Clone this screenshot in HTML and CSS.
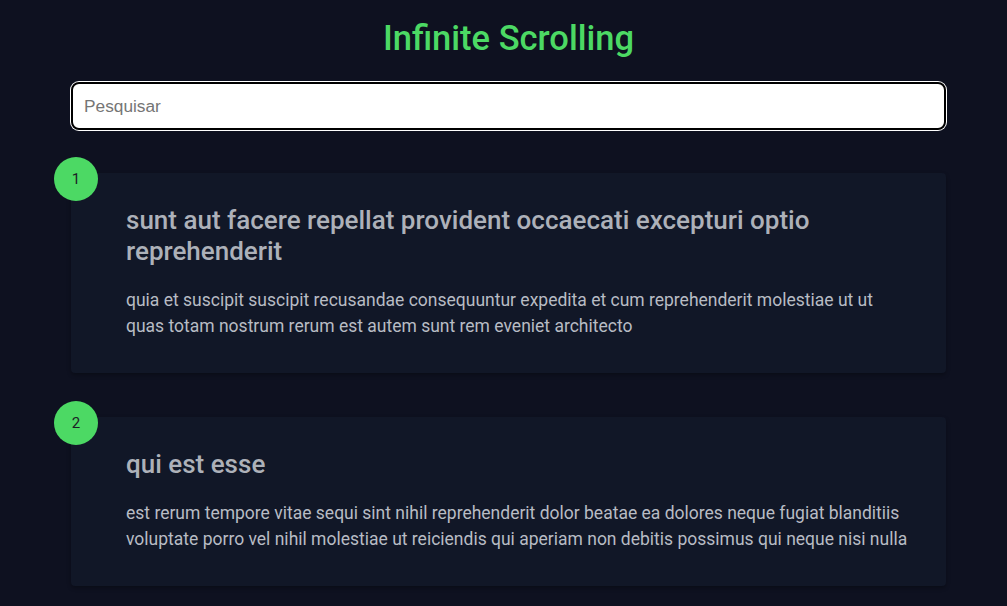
FILE: index.html
```html
<!DOCTYPE html>
<html lang="pt">
<head>
<meta charset="utf-8">
<title>Infinite Scrolling</title>
<link rel="stylesheet" href="styles.css">
</head>
<body>
<main class="page">
  <h1 class="title">Infinite Scrolling</h1>
  <input class="search" type="text" placeholder="Pesquisar">
  <div class="posts">
    <article class="post">
      <div class="number">1</div>
      <h2 class="post-title">sunt aut facere repellat provident occaecati excepturi optio reprehenderit</h2>
      <p class="post-body">quia et suscipit suscipit recusandae consequuntur expedita et cum reprehenderit molestiae ut ut quas totam nostrum rerum est autem sunt rem eveniet architecto</p>
    </article>
    <article class="post">
      <div class="number">2</div>
      <h2 class="post-title">qui est esse</h2>
      <p class="post-body">est rerum tempore vitae sequi sint nihil reprehenderit dolor beatae ea dolores neque fugiat blanditiis voluptate porro vel nihil molestiae ut reiciendis qui aperiam non debitis possimus qui neque nisi nulla</p>
    </article>
  </div>
</main>
</body>
</html>
```
FILE: styles.css
```css
html, body {
  margin: 0;
  padding: 0;
  background: #0e1120;
  height: 100%;
  overflow: hidden;
}
body {
  font-family: Roboto, "Liberation Sans", sans-serif;
}
.page {
  width: 875px;
  margin-left: 71px;
  padding-top: 19px;
  display: flex;
  flex-direction: column;
}
.title {
  margin: 0;
  text-align: center;
  font-size: 34.5px;
  line-height: 38px;
  font-weight: 500;
  color: #4cd964;
}
.search {
  margin-top: 25px;
  box-sizing: border-box;
  width: 875px;
  height: 48px;
  border: 2px solid #000;
  border-radius: 8px;
  box-shadow: 0 0 0 1px #fff;
  background: #fff;
  padding: 0 11px;
  font-family: "Liberation Sans", Arial, sans-serif;
  font-size: 17.3px;
  outline: none;
}
.search::placeholder {
  color: #757575;
}
.posts {
  margin-top: 43px;
  display: flex;
  flex-direction: column;
  gap: 44px;
}
.post {
  position: relative;
  background: #111727;
  border-radius: 4px;
  box-shadow: 0 2px 4px rgba(0, 0, 0, 0.3);
  padding: 32px 36px 34px 55px;
}
.number {
  position: absolute;
  top: -16px;
  left: -17px;
  width: 44px;
  height: 44px;
  border-radius: 50%;
  background: #4cd964;
  color: #1c1f26;
  font-size: 15px;
  display: flex;
  align-items: center;
  justify-content: center;
}
.post-title {
  margin: 0 0 20px;
  font-size: 26px;
  line-height: 31px;
  font-weight: 500;
  color: #adb1b9;
}
.post-body {
  margin: 0;
  font-size: 17.5px;
  line-height: 26px;
  color: #b8bcc4;
}
```
